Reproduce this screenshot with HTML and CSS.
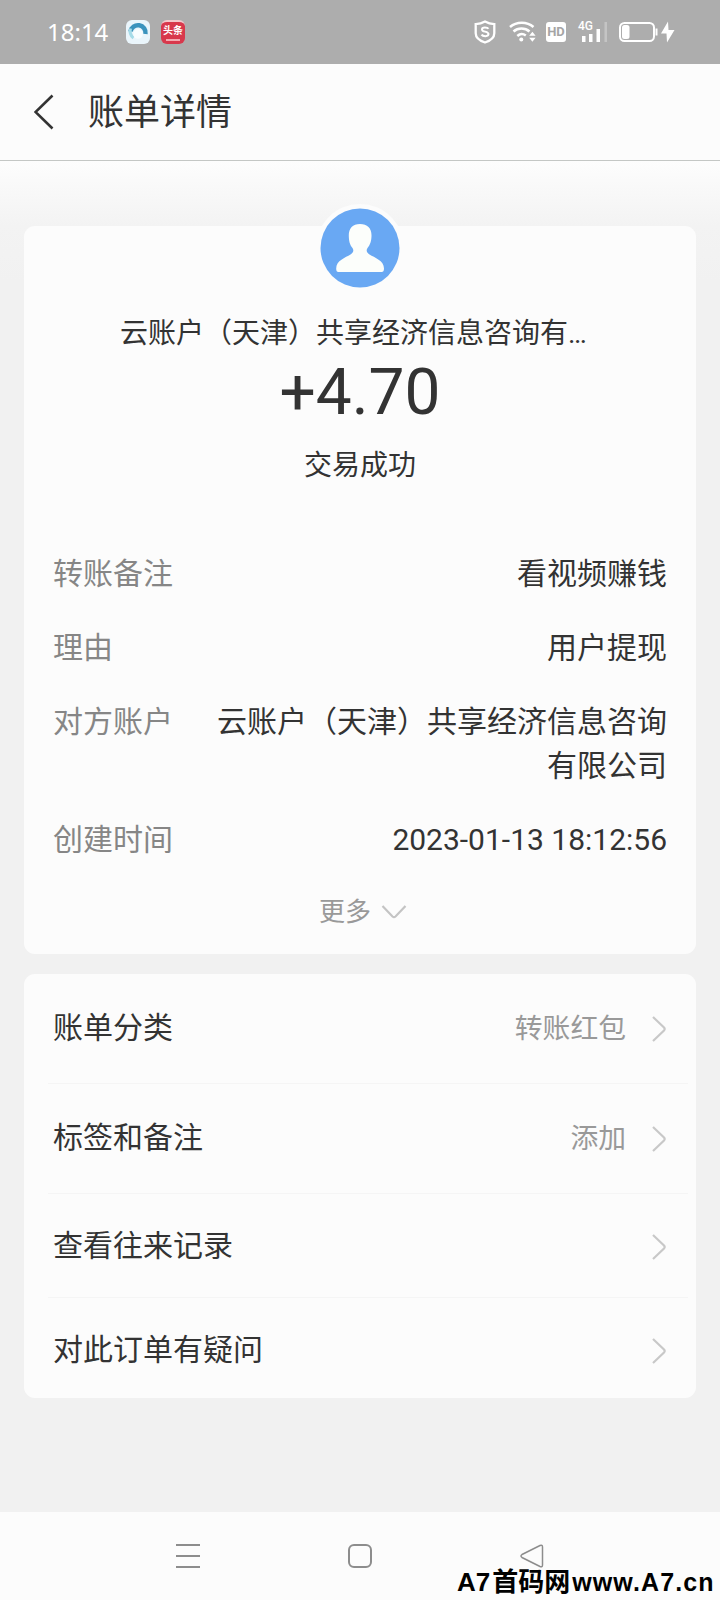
FILE: index.html
```html
<!DOCTYPE html>
<html lang="zh-CN">
<head>
    <meta charset="UTF-8">
    <meta name="viewport" content="width=device-width, initial-scale=1.0">
    <title>账单详情</title>
    <link rel="stylesheet" href="styles.css">
</head>
<body>
    <div class="status-bar">
        <span class="clock">18:14</span>
        <svg class="app-browser" width="24" height="24" viewBox="0 0 24 24">
            <rect width="24" height="24" rx="6" fill="#eaf5fb"/>
            <path d="M4.500 11.500a7.600 7.600 0 0 1 15 2.500" fill="none" stroke="#3b93bd" stroke-width="4.500"/>
            <path d="M4.500 8.500q-1.500 6 3 9.500" fill="none" stroke="#a5dbe8" stroke-width="3"/>
            <circle cx="12" cy="14" r="4.800" fill="#f8fdff"/>
        </svg>
        <span class="app-news">头条<i></i></span>
        <div class="status-icons">
            <svg width="22" height="24" viewBox="0 0 22 24">
                <path d="M11 1.500c3 1.700 6 2.500 9.300 2.700v9c0 4.500-4 7.500-9.300 9.300-5.300-1.800-9.300-4.800-9.300-9.300v-9c3.300-.2 6.300-1 9.300-2.700z" fill="none" stroke="#fff" stroke-width="2.300"/>
                <path d="M14.500 8.800c-1-1.500-6.500-2-6.500.6 0 2.900 6.500 1.600 6.500 4.700 0 2.700-5.500 2.600-7 .5" fill="none" stroke="#fff" stroke-width="2"/>
            </svg>
            <svg class="wifi" width="27" height="22" viewBox="0 0 27 22">
                <path d="M1 6c6.500-5.700 17-5.700 23.500 0M4.500 10.500c4.500-4 11.500-4 16 0M8.300 15c2.600-2.300 6-2.300 8.500-.5" fill="none" stroke="#fff" stroke-width="2.500"/>
                <circle cx="12.300" cy="18.500" r="2" fill="#fff"/>
                <path d="M20.200 14.700l3.200-4 3.200 4zM20.200 16.800l3.200 4 3.200-4z" fill="#fff"/>
            </svg>
            <span class="hd">HD</span>
            <div class="signal">
                <span class="signal-type">4G</span>
                <svg width="30" height="22" viewBox="0 0 30 22">
                    <path d="M4 15h3.500v6H4zM11 13h3.500v8H11zM18.500 8H22v13h-3.500z" fill="#fff"/>
                    <path d="M26.500 1H29v20h-2.500z" fill="#c4c4c4"/>
                </svg>
            </div>
            <svg class="battery" width="56" height="22" viewBox="0 0 56 22">
                <rect x="1" y="2" width="34" height="18" rx="4.500" fill="none" stroke="#fff" stroke-width="2"/>
                <rect x="3" y="4" width="7.500" height="14" rx="2.500" fill="#fff"/>
                <path d="M37.500 7.500v7" stroke="#fff" stroke-width="2"/>
                <path d="M49 .5L42 12.500h5.500L48 21.500 55.500 9h-6z" fill="#fff"/>
            </svg>
        </div>
    </div>

    <div class="header">
        <svg width="20" height="36" viewBox="0 0 20 36">
            <path d="M18.500 1.500L1.500 18l17 16.500" fill="none" stroke="#333" stroke-width="2.600"/>
        </svg>
        <h1>账单详情</h1>
    </div>

    <div class="content">
        <div class="card bill">
            <svg class="avatar" width="88" height="88" viewBox="0 0 88 88">
                <circle cx="44" cy="44" r="44" fill="#fcfcfc"/>
                <circle cx="44" cy="44" r="39.500" fill="#69a8f3"/>
                <path d="M44 20c7.500 0 11.800 4.500 11.500 12-.2 5.500-1.200 8.500-4 12-1.500 2.500-1 4.500 2 6.500 5 3 14.500 6 14.500 14 0 2.500-.8 3.500-2.500 3.500h-43c-1.700 0-2.300-1-2.300-3.500 0-8 9.300-11 14.300-14 3-2 3.500-4 2-6.500-2.800-3.500-3.500-6.500-3.700-12C32.600 24.500 36.500 20 44 20z" fill="#fcfefb"/>
            </svg>
            <div class="payee">云账户（天津）共享经济信息咨询有…</div>
            <div class="amount">+4.70</div>
            <div class="result">交易成功</div>

            <div class="details">
                <div class="row">
                    <span class="label">转账备注</span>
                    <span class="value">看视频赚钱</span>
                </div>
                <div class="row">
                    <span class="label">理由</span>
                    <span class="value">用户提现</span>
                </div>
                <div class="row">
                    <span class="label">对方账户</span>
                    <span class="value">云账户（天津）共享经济信息咨询有限公司</span>
                </div>
                <div class="row">
                    <span class="label">创建时间</span>
                    <span class="value">2023-01-13 18:12:56</span>
                </div>
            </div>

            <div class="more">
                更多
                <svg width="26" height="16" viewBox="0 0 26 16">
                    <path d="M1.500 2l10 10.500q1.500 1.200 3 0L24.500 2" fill="none" stroke="#c4c4c4" stroke-width="2.200"/>
                </svg>
            </div>
        </div>

        <div class="card menu">
            <div class="menu-item tall">
                <span class="menu-title">账单分类</span>
                <span class="menu-value">转账红包</span>
                <svg class="arrow" width="14" height="26" viewBox="0 0 14 26"><path d="M1 1l11 10.500q1.300 1.500 0 3L1 25"/></svg>
            </div>
            <div class="menu-item tall">
                <span class="menu-title">标签和备注</span>
                <span class="menu-value">添加</span>
                <svg class="arrow" width="14" height="26" viewBox="0 0 14 26"><path d="M1 1l11 10.500q1.300 1.500 0 3L1 25"/></svg>
            </div>
            <div class="menu-item">
                <span class="menu-title">查看往来记录</span>
                <svg class="arrow" width="14" height="26" viewBox="0 0 14 26"><path d="M1 1l11 10.500q1.300 1.500 0 3L1 25"/></svg>
            </div>
            <div class="menu-item">
                <span class="menu-title">对此订单有疑问</span>
                <svg class="arrow" width="14" height="26" viewBox="0 0 14 26"><path d="M1 1l11 10.500q1.300 1.500 0 3L1 25"/></svg>
            </div>
        </div>
    </div>

    <div class="nav-bar">
        <svg width="24" height="24" viewBox="0 0 24 24"><path d="M0 1h24M0 12h24M0 23h24"/></svg>
        <svg width="24" height="24" viewBox="0 0 24 24"><rect x="1" y="1" width="22" height="22" rx="5"/></svg>
        <svg width="24" height="24" viewBox="0 0 24 24"><path d="M2 10.500L20 1.500q2.500-1 2.500 1.500v18q0 2.500-2.500 1.500L2 13.500q-2-1.500 0-3z" stroke-width="1.500"/></svg>
    </div>
    <div class="watermark"><span>A7</span><span class="watermark-cn">首码网</span><span class="watermark-url">www.A7.cn</span></div>
</body>
</html>
```

FILE: styles.css
```css
* {
    box-sizing: border-box;
}
body {
    margin: 0;
    width: 720px;
    height: 1600px;
    display: flex;
    flex-direction: column;
    position: relative;
    overflow: hidden;
    font-family: Roboto, "Noto Sans CJK SC", sans-serif;
    color: #333;
    background-color: #f1f1f1;
}
svg {
    display: block;
    flex-shrink: 0;
}
.status-bar {
    height: 64px;
    padding: 0 45px 0 47px;
    display: flex;
    align-items: center;
    background-color: #adadad;
    color: #fff;
}
.clock {
    width: 79px;
    padding-bottom: 2px;
    font-family: "Noto Sans", sans-serif;
    font-size: 24px;
}
.app-news {
    width: 24px;
    height: 24px;
    margin-left: 11px;
    border-radius: 6px;
    background-color: #d8384c;
    border-top: 2px solid #f3c9cd;
    font-size: 10px;
    font-weight: bold;
    line-height: 17px;
    text-align: center;
    white-space: nowrap;
}
.app-news i {
    display: block;
    width: 14px;
    height: 2px;
    margin: 0 auto;
    background-color: #f4a9b1;
}
.status-icons {
    margin-left: auto;
    display: flex;
    align-items: center;
}
.wifi {
    margin-left: 13px;
}
.hd {
    width: 20px;
    height: 20px;
    margin-left: 10px;
    border-radius: 3px;
    background-color: #fff;
    color: #a5a5a5;
    font-size: 13px;
    font-weight: bold;
    line-height: 20px;
    text-align: center;
}
.signal {
    position: relative;
    margin-left: 12px;
}
.signal-type {
    position: absolute;
    left: 0;
    top: 0;
    font-size: 12px;
    font-weight: 500;
    line-height: 11px;
}
.battery {
    margin-left: 11px;
}
.header {
    height: 97px;
    padding: 0 34px;
    display: flex;
    align-items: center;
    gap: 34px;
    background-color: #fcfcfc;
    border-bottom: 1px solid #c4c7c5;
}
.header h1 {
    margin: 0;
    padding-top: 2px;
    font-size: 36px;
    font-weight: normal;
    line-height: 52px;
}
.content {
    flex: 1;
    padding: 65px 24px 0;
    background: linear-gradient(#fdfdfd, #f3f3f3 65px, #f1f1f1 120px);
}
.card {
    border-radius: 11px;
    background-color: #fcfcfc;
}
.bill {
    position: relative;
    height: 728px;
    padding: 88px 29px 0;
    display: flex;
    flex-direction: column;
}
.avatar {
    position: absolute;
    left: 292px;
    top: -22px;
}
.payee {
    margin-left: 67px;
    font-size: 28px;
    line-height: 40px;
    white-space: nowrap;
}
.amount {
    margin-top: 1px;
    font-size: 64px;
    line-height: 76px;
    text-align: center;
}
.result {
    margin-top: 15px;
    font-size: 28px;
    line-height: 40px;
    text-align: center;
}
.details {
    margin-top: 66px;
    display: flex;
    flex-direction: column;
    gap: 30px;
    font-size: 30px;
    line-height: 44px;
}
.row {
    display: flex;
    justify-content: space-between;
}
.label {
    color: #868686;
}
.value {
    width: 452px;
    text-align: right;
}
.more {
    margin-top: 32px;
    display: flex;
    justify-content: center;
    align-items: center;
    gap: 10px;
    padding-left: 6px;
    font-size: 26px;
    line-height: 36px;
    color: #999;
}
.menu {
    height: 424px;
    margin-top: 20px;
    padding-left: 24px;
    padding-right: 8px;
}
.menu-item {
    height: 104px;
    padding: 2px 22px 0 5px;
    display: flex;
    align-items: center;
    font-size: 30px;
    line-height: 44px;
    border-bottom: 1px solid #f5f5f5;
}
.menu-item.tall {
    height: 110px;
    padding-top: 0;
}
.menu-item:last-child {
    height: 100px;
    padding-top: 5px;
    border-bottom: none;
}
.menu-title {
    margin-right: auto;
    padding-bottom: 2px;
}
.menu-value {
    margin-right: 26px;
    font-size: 27.8px;
    color: #999;
}
.arrow {
    fill: none;
    stroke: #c8c8c8;
    stroke-width: 2.2;
}
.nav-bar {
    height: 88px;
    padding: 0 176px;
    display: flex;
    justify-content: space-between;
    align-items: center;
    background-color: #fcfcfc;
    fill: none;
    stroke: #8d8d8d;
    stroke-width: 2;
}
.watermark {
    position: absolute;
    left: 457px;
    top: 1564px;
    display: flex;
    align-items: baseline;
    font-family: "Liberation Sans", "Noto Sans CJK SC", sans-serif;
    font-size: 26px;
    font-weight: bold;
    line-height: 36px;
    color: #000;
    white-space: nowrap;
}
.watermark-cn {
    margin-left: 2px;
}
.watermark-url {
    margin-left: 2px;
    font-size: 25px;
    letter-spacing: 1.1px;
}
```
